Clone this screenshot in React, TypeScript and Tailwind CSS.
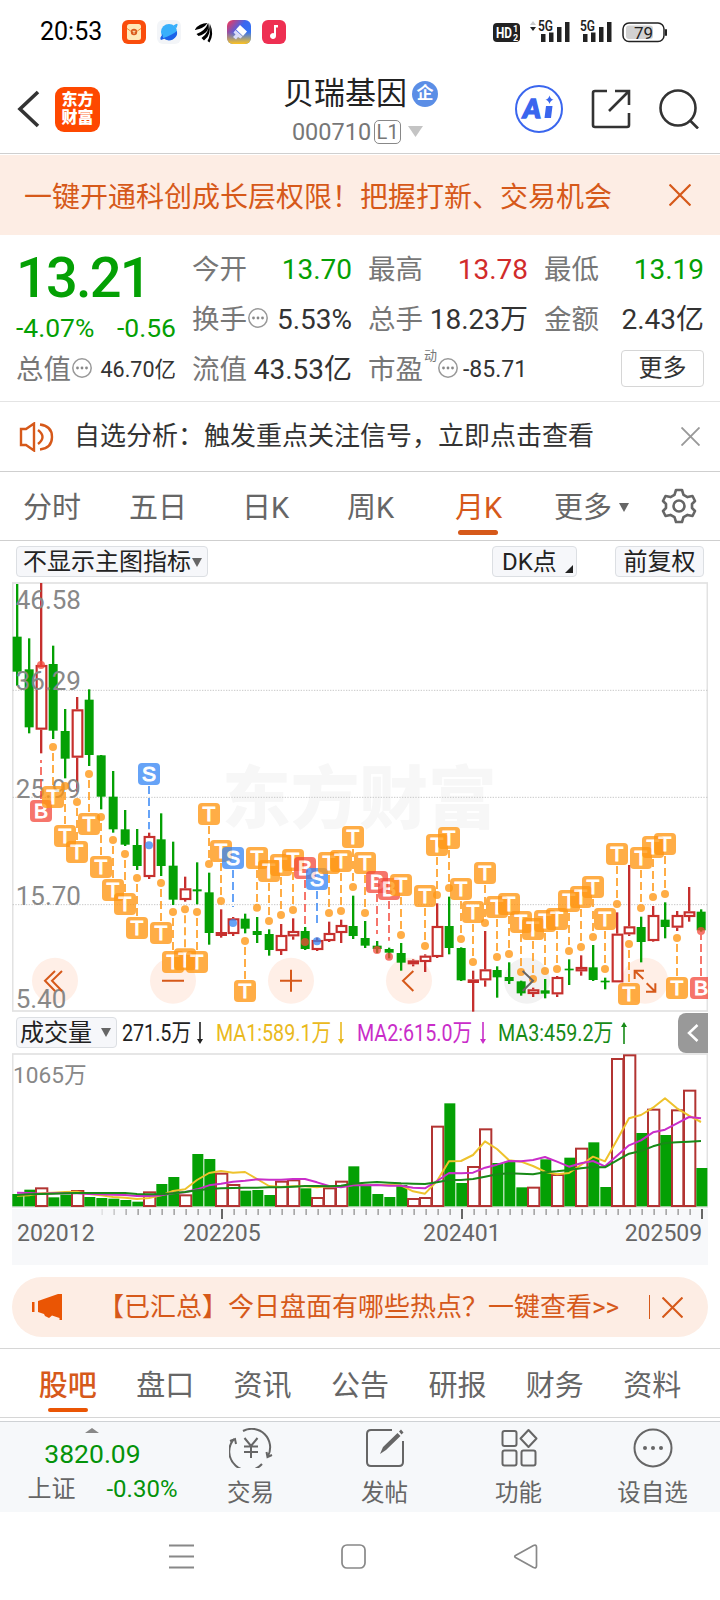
import type { ReactNode } from 'react';

type Candle = ['g' | 'r', number, number, number, number];
type Marker = [number, 'T' | 'B' | 'S', number, number];

// [colour, high, body top, body bottom, low], one per month
const CANDLES: Candle[] = [
  ['g', 27, 185, 290, 332],
  ['g', 190, 283, 457, 475],
  ['r', 24, 270, 464, 535],
  ['g', 212, 267, 467, 492],
  ['g', 402, 468, 551, 610],
  ['r', 366, 403, 548, 650],
  ['g', 343, 374, 540, 573],
  ['g', 540, 541, 665, 703],
  ['g', 588, 665, 763, 773],
  ['g', 705, 763, 809, 813],
  ['g', 762, 810, 873, 885],
  ['r', 773, 783, 906, 912],
  ['g', 715, 793, 873, 903],
  ['g', 800, 872, 974, 990],
  ['r', 905, 940, 975, 980],
  ['g', 862, 943, 949, 988],
  ['g', 893, 952, 1074, 1109],
  ['r', 1003, 1071, 1083, 1088],
  ['r', 1026, 1030, 1077, 1083],
  ['g', 1016, 1031, 1061, 1075],
  ['g', 1026, 1068, 1080, 1104],
  ['g', 1063, 1077, 1125, 1142],
  ['r', 1047, 1080, 1128, 1140],
  ['r', 1030, 1068, 1084, 1094],
  ['g', 1056, 1068, 1122, 1125],
  ['r', 1088, 1095, 1125, 1128],
  ['r', 1040, 1074, 1098, 1101],
  ['r', 1034, 1050, 1074, 1104],
  ['g', 962, 1053, 1083, 1092],
  ['g', 1038, 1089, 1112, 1119],
  ['g', 1098, 1112, 1122, 1134],
  ['g', 1118, 1122, 1133, 1150],
  ['g', 1104, 1134, 1163, 1187],
  ['r', 1153, 1156, 1168, 1174],
  ['r', 1138, 1142, 1161, 1191],
  ['r', 985, 1053, 1146, 1149],
  ['g', 965, 1053, 1119, 1138],
  ['g', 1117, 1119, 1216, 1218],
  ['r', 1187, 1213, 1224, 1310],
  ['r', 1068, 1183, 1216, 1235],
  ['g', 1174, 1185, 1207, 1268],
  ['g', 1162, 1206, 1218, 1227],
  ['g', 1217, 1219, 1255, 1262],
  ['r', 1238, 1243, 1257, 1266],
  ['g', 1212, 1246, 1256, 1270],
  ['r', 1203, 1206, 1258, 1266],
  ['g', 1153, 1181, 1186, 1230],
  ['r', 1141, 1176, 1189, 1202],
  ['g', 1110, 1177, 1215, 1218],
  ['g', 1208, 1217, 1222, 1243],
  ['r', 1012, 1076, 1222, 1222],
  ['r', 870, 1054, 1078, 1083],
  ['g', 1025, 1056, 1101, 1162],
  ['r', 993, 1020, 1098, 1100],
  ['g', 982, 1034, 1056, 1090],
  ['r', 1008, 1020, 1058, 1068],
  ['r', 936, 1009, 1026, 1040],
  ['g', 1003, 1010, 1066, 1070],
];

// [month index, kind, tag centre, dot centre]
const MARKERS: Marker[] = [
  [2, 'B', 708, 270], [3, 'T', 666, 516], [4, 'T', 783, 633], [5, 'T', 831, 681],
  [6, 'T', 747, 597], [7, 'T', 876, 726], [8, 'T', 945, 795], [9, 'T', 987, 837],
  [10, 'T', 1059, 909], [11, 'S', 597, 811], [12, 'T', 1074, 924], [13, 'T', 1161, 1011],
  [14, 'T', 1153, 1003], [15, 'T', 1161, 1011], [16, 'T', 717, 867], [17, 'T', 828, 978],
  [18, 'S', 849, 1044], [19, 'T', 1248, 1098], [20, 'T', 849, 998], [21, 'T', 888, 1038],
  [22, 'T', 870, 1020], [23, 'T', 855, 1005], [24, 'B', 879, 1101], [25, 'S', 912, 1099],
  [26, 'T', 864, 1014], [27, 'T', 858, 1008], [28, 'T', 786, 936], [29, 'T', 864, 1014],
  [30, 'B', 921, 1125], [31, 'B', 942, 1145], [32, 'T', 930, 1080], [34, 'T', 963, 1113],
  [35, 'T', 810, 960], [36, 'T', 789, 939], [37, 'T', 942, 1092], [38, 'T', 1011, 1161],
  [39, 'T', 894, 1044], [40, 'T', 996, 1146], [41, 'T', 987, 1137], [42, 'T', 1041, 1191],
  [43, 'T', 1062, 1212], [44, 'T', 1038, 1188], [45, 'T', 1032, 1182], [46, 'T', 978, 1128],
  [47, 'T', 966, 1116], [48, 'T', 936, 1086], [49, 'T', 1032, 1182], [50, 'T', 837, 987],
  [51, 'T', 1257, 1107], [52, 'T', 849, 999], [53, 'T', 816, 966], [54, 'T', 807, 957],
  [55, 'T', 1239, 1089], [57, 'B', 1239, 1068],
];

const VOLUMES = [
  567, 554, 548, 577, 569, 556, 576, 579, 581, 585, 590, 560, 537, 516, 569, 447, 462, 504, 538, 557,
  555, 570, 528, 524, 550, 577, 548, 528, 484, 540, 567, 576, 540, 580, 577, 363, 295, 534, 484, 371,
  474, 470, 547, 546, 463, 508, 458, 429, 412, 546, 160, 149, 384, 312, 390, 314, 255, 489,
];

const MA1 = [
  572, 571, 565, 563, 561, 560, 567, 571, 576, 578, 582, 579, 571, 558, 553, 525, 504, 498, 503, 501,
  522, 543, 546, 544, 544, 547, 543, 545, 540, 540, 540, 540, 541, 559, 566, 528, 469, 468, 450, 409,
  432, 466, 470, 483, 500, 508, 504, 480, 455, 469, 405, 340, 330, 308, 280, 310, 332, 351,
];
const MA2 = [
  563, 564, 566, 565, 565, 565, 567, 568, 569, 570, 573, 573, 571, 565, 562, 553, 541, 536, 530, 527,
  523, 524, 524, 522, 522, 532, 543, 547, 541, 541, 540, 542, 542, 548, 550, 528, 504, 505, 503, 488,
  479, 468, 469, 465, 456, 470, 485, 475, 468, 484, 452, 421, 406, 382, 374, 355, 336, 340,
];
const MA3 = [
  570, 568, 567, 566, 565, 564, 564, 564, 564, 564, 567, 568, 568, 565, 561, 556, 552, 550, 549, 548,
  548, 547, 547, 545, 543, 543, 544, 542, 536, 533, 531, 533, 535, 536, 537, 532, 525, 525, 522, 515,
  508, 505, 506, 508, 502, 499, 495, 490, 486, 487, 466, 446, 438, 424, 414, 412, 410, 408,
];

const GREEN = '#04a004';
const RED = '#c62f2d';
const MARKER_COLORS = { T: '#ff9713', B: '#f4473a', S: '#3485f5' };

const cx = (i: number) => 51 + i * 36;
const line = (ys: number[]) => ys.map((y, i) => `${cx(i)},${y}`).join(' ');

function StatusBar() {
  return (
    <div className="h-16 flex items-center pl-10 pr-[53px] text-black">
      <span className="text-[25px] w-[82px]">20:53</span>
      <div className="flex items-center gap-[11px]">
        <svg width="24" height="24" viewBox="0 0 24 24">
          <rect width="24" height="24" rx="6" fill="#fa4d0c" />
          <rect x="5" y="4" width="14" height="16" rx="2.5" fill="#ffe9b8" />
          <path d="M5 8.5Q12 15 19 8.5" fill="none" stroke="#ef8d35" strokeWidth="1" />
          <circle cx="12" cy="12" r="3.2" fill="#d95a1c" />
          <path d="M10.6 11.3h2.8M12 11.3v2.6" stroke="#ffe9b8" />
        </svg>
        <svg width="24" height="24" viewBox="0 0 24 24">
          <rect width="24" height="24" rx="6" fill="#f3f5f8" />
          <circle cx="12" cy="12" r="8" fill="#39b0fb" />
          <path d="M20 11A8 8 0 0 1 6.500 18Q15 15 20 11Z" fill="#1c62e8" />
          <path d="M4 20Q2 18 6 14Q5 18 8 18.500Z" fill="#1c62e8" />
          <path d="M16.500 5.500Q21 2.500 20.500 5T19 8.500z" fill="#39b0fb" />
        </svg>
        <svg width="24" height="24" viewBox="0 0 24 24">
          <path d="M3 9.500Q7 3 15.500 3Q12 8.500 3 10ZM4.500 14Q13 11 16.200 3Q18.200 13 6.500 16ZM9.500 18Q17 13 17 3Q20 15 12 20.500ZM15.500 21Q19 15 18 4Q22.500 14 17.500 22.500Z" fill="#000" />
        </svg>
        <svg width="24" height="24" viewBox="0 0 24 24">
          <defs>
            <linearGradient id="brush" x1="0" y1="0.1" x2="1" y2="0.9">
              <stop offset="0" stopColor="#f0385c" />
              <stop offset="0.45" stopColor="#3a66f0" />
              <stop offset="1" stopColor="#2f7bf6" />
            </linearGradient>
            <linearGradient id="brushLow" x1="0" y1="0" x2="0" y2="1">
              <stop offset="0.5" stopColor="#ffc21f" stopOpacity="0" />
              <stop offset="1" stopColor="#ffc21f" />
            </linearGradient>
          </defs>
          <rect width="24" height="24" rx="6" fill="url(#brush)" />
          <rect width="24" height="24" rx="6" fill="url(#brushLow)" />
          <path d="M13 5l7 6.500-4 4.500-7-6.500z" fill="#fff" />
          <path d="M8.500 10l7 6.500-2 2-2.500-1.500-2 2.500-3-2.500 2.500-2.500-2-2z" fill="#d9dcf8" />
        </svg>
        <svg width="24" height="24" viewBox="0 0 24 24">
          <rect width="24" height="24" rx="6" fill="#ee2f52" />
          <path d="M12 5h4v2.500h-2V16a3 3 0 1 1-2-2.800V5z" fill="#fff" />
        </svg>
      </div>
      <div className="ml-auto flex items-center">
        <svg width="174" height="28" viewBox="0 0 174 28" fontFamily="Roboto">
          <rect x="0" y="5" width="27" height="19" rx="4" fill="#222" />
          <text x="3" y="20" fontSize="15" fontWeight="700" fill="#fff" textLength="16" lengthAdjust="spacingAndGlyphs">HD</text>
          <text x="20" y="14" fontSize="9" fontWeight="700" fill="#fff">1</text>
          <text x="20" y="22.500" fontSize="9" fontWeight="700" fill="#fff">2</text>
          <path d="M37 7l3-4 3 4z" fill="#ccc" />
          <path d="M37 9l3 4 3-4z" fill="#222" />
          {[0, 42].map((x) => (
            <g key={x} fill="#222">
              <text x={45 + x} y="13" fontSize="14" fontWeight="600" textLength="15" lengthAdjust="spacingAndGlyphs">5G</text>
              <rect x={48 + x} y="16" width="4.500" height="8" />
              <rect x={56 + x} y="14.500" width="4.500" height="9.500" />
              <rect x={64 + x} y="9" width="4.500" height="15" />
              <rect x={72 + x} y="4" width="4.500" height="20" />
            </g>
          ))}
          <rect x="130" y="5" width="41" height="18.500" rx="6" fill="#fff" stroke="#222" strokeWidth="1.500" />
          <rect x="133" y="7.500" width="27" height="13.500" rx="3" fill="#d2d2d2" />
          <rect x="172" y="11" width="2" height="7" rx="1" fill="#222" />
          <text x="141" y="20.500" fontSize="17" fill="#222">79</text>
        </svg>
      </div>
    </div>
  );
}

function Header() {
  return (
    <div className="h-[90px] flex items-center justify-between border-b border-[#cfcfcf] pl-4 pr-4 pt-px">
      <div className="flex items-center w-[202px] gap-[14px]">
        <svg width="25" height="38" viewBox="0 0 25 38" fill="none" stroke="#333" strokeWidth="3.600">
          <path d="M22 2L4 19l18 17" />
        </svg>
        <div className="size-[45px] rounded-[9px] bg-[#fe4800] text-white font-black text-[16px] leading-[18px] flex flex-col items-center justify-center">
          <span>东方</span>
          <span>财富</span>
        </div>
      </div>
      <div className="flex flex-col items-center mr-[12px]">
        <div className="flex items-center gap-[5px] h-10 mt-[5px]">
          <span className="text-[31px] leading-10 text-[#222]">贝瑞基因</span>
          <span className="size-[26px] rounded-full bg-[#5b8ee6] text-white text-[17px] leading-[25px] text-center font-bold">企</span>
        </div>
        <div className="flex items-center text-[23.500px] leading-9 text-[#777] mr-1.5">
          <span>000710</span>
          <span className="ml-[3px] h-6 w-[27px] rounded-[5px] border-[1.500px] border-[#888] text-[20px] leading-[22px] text-center">L1</span>
          <svg className="ml-[7px]" width="15" height="11"><path d="M0 0h15L7.500 11z" fill="#c4c4c4" /></svg>
        </div>
      </div>
      <div className="flex items-center w-[189px] gap-7">
        <svg width="48" height="48" viewBox="0 0 48 48" className="shrink-0">
          <circle cx="24" cy="24" r="23" fill="none" stroke="#3a66ee" strokeWidth="2" />
          <text x="8" y="33" fontSize="27" fontWeight="900" fontStyle="italic" fontFamily="Lato" fill="#3a66ee" stroke="#3a66ee" strokeWidth="1.500">A</text>
          <path d="M31 21h6.500l-1.500 12h-6.500z" fill="#3a66ee" />
          <path d="M34.500 10.500q.8 3.500 4 4.300q-3.200.8-4 4.300q-.8-3.500-4-4.300q3.200-.8 4-4.300z" fill="#3a66ee" />
        </svg>
        <svg width="40" height="40" viewBox="0 0 40 40" fill="none" stroke="#333" strokeWidth="2.600" className="shrink-0">
          <path d="M16 2H4Q2 2 2 4v32q0 2 2 2h32q2 0 2-2V24M24 2h14v14M18 22L38 2" />
        </svg>
        <svg width="40" height="40" viewBox="0 0 40 40" fill="none" stroke="#333" strokeWidth="2.600" className="shrink-0">
          <circle cx="19" cy="19" r="17.500" />
          <path d="M30.500 31l8.500 8.500" />
        </svg>
      </div>
    </div>
  );
}

function Close({ size, color }: { size: number; color: string }) {
  return (
    <svg width={size} height={size} viewBox="0 0 20 20" stroke={color} strokeWidth="2">
      <path d="M0.500 0.500l19 19M19.500 0.500l-19 19" />
    </svg>
  );
}

function Dots() {
  return (
    <svg width="20" height="20" viewBox="0 0 20 20" className="shrink-0 mb-1 ml-px">
      <circle cx="10" cy="10" r="9.200" fill="none" stroke="#999" strokeWidth="1.500" />
      <g fill="#888">
        <circle cx="5.500" cy="10" r="1.400" />
        <circle cx="10" cy="10" r="1.400" />
        <circle cx="14.500" cy="10" r="1.400" />
      </g>
    </svg>
  );
}

function Stat({ label, value, tone = 'text-[#333]', info }: { label: string; value: string; tone?: string; info?: boolean }) {
  return (
    <div className="h-[50px] flex items-center justify-between whitespace-nowrap">
      <span className="flex items-center text-[27.500px] text-[#777]">
        {label}
        {info && <Dots />}
      </span>
      <span className={`text-[28px] ${tone}`}>{value}</span>
    </div>
  );
}

function Quote() {
  return (
    <section className="h-[167px] border-b border-[#e4e4e4] px-4 pt-[10px] flex justify-between">
      <div className="w-[160px] flex flex-col">
        <div className="h-[61px] text-[56px] leading-[66px] font-medium tracking-[-1.8px] text-[#04a004]">13.21</div>
        <div className="h-[39px] flex items-center justify-between text-[26.500px] text-[#04a004] pt-[4px]">
          <span>-4.07%</span>
          <span>-0.56</span>
        </div>
        <div className="h-[50px] flex items-center justify-between whitespace-nowrap">
          <span className="flex items-center text-[27.500px] text-[#777]">总值<Dots /></span>
          <span className="text-[21.500px] text-[#333]">46.70亿</span>
        </div>
      </div>
      <div className="w-[160px]">
        <Stat label="今开" value="13.70" tone="text-[#04a004]" />
        <Stat label="换手" value="5.53%" info />
        <Stat label="流值" value="43.53亿" />
      </div>
      <div className="w-[160px]">
        <Stat label="最高" value="13.78" tone="text-[#d12b2b]" />
        <Stat label="总手" value="18.23万" />
        <div className="h-[50px] flex items-center whitespace-nowrap text-[27.500px] text-[#777]">
          市盈
          <span className="text-[13px] self-start leading-4 pt-[3px] ml-px">动</span>
          <Dots />
          <span className="ml-[5px] text-[23px] text-[#333]">-85.71</span>
        </div>
      </div>
      <div className="w-[160px]">
        <Stat label="最低" value="13.19" tone="text-[#04a004]" />
        <Stat label="金额" value="2.43亿" />
        <div className="h-[46px] flex items-center justify-end">
          <span className="w-[83px] h-[37px] rounded-[4px] border border-[#d6d6d6] text-2xl leading-[34px] text-center text-[#333]">更多</span>
        </div>
      </div>
    </section>
  );
}

function Period({ children, className }: { children: ReactNode; className: string }) {
  return <div className={`${className} h-full shrink-0 flex items-center whitespace-nowrap pt-[6px] text-[29px] text-[#666]`}>{children}</div>;
}

function Periods() {
  return (
    <nav className="h-[69px] border-b border-[#cfcfcf] flex items-center pl-[23px]">
      <Period className="w-[106px]">分时</Period>
      <Period className="w-[113px]">五日</Period>
      <Period className="w-[105px]">日K</Period>
      <Period className="w-[108px]">周K</Period>
      <div className="w-[99px] h-full shrink-0 flex flex-col text-[29px] leading-[73px] text-[#d6591a]">
        <span className="h-[58px]">月K</span>
        <span className="ml-[3px] w-10 h-[5px] shrink-0 rounded-full bg-[#d6591a]" />
      </div>
      <Period className="w-[107px]">
        更多
        <svg className="ml-[7px] mb-1" width="10" height="9"><path d="M0 0h10L5 9z" fill="#666" /></svg>
      </Period>
      <svg width="36" height="36" viewBox="0 0 36 36" fill="none" stroke="#666" strokeWidth="2.600" strokeLinejoin="round">
        <path d="M15 2h6l1.500 4.800 4 2.300 5-1.100 2.500 5-3 3v4l3 3-2.500 5-5-1.100-4 2.300L21 34h-6l-1.500-4.800-4-2.300-5 1.100-2.500-5 3-3v-4l-3-3 2.500-5 5 1.100 4-2.300z" />
        <circle cx="18" cy="18" r="5.500" />
      </svg>
    </nav>
  );
}

function CandleShape({ c, i }: { c: Candle; i: number }) {
  const [kind, high, top, bottom, low] = c;
  const x = cx(i);
  const thin = bottom - top < 13;
  if (kind === 'g') {
    return (
      <g fill={GREEN}>
        <rect x={x - 3} y={high} width="7" height={low - high} />
        <rect x={x - 13} y={top} width="27" height={bottom - top} />
      </g>
    );
  }
  return (
    <g fill={RED}>
      <rect x={x - 3} y={high} width="7" height={top - high} />
      <rect x={x - 3} y={bottom} width="7" height={low - bottom} />
      {thin ? (
        <rect x={x - 16} y={top} width="34" height={bottom - top} />
      ) : (
        <rect x={x - 13} y={top + 3} width="29" height={bottom - top - 6} fill="#fff" stroke={RED} strokeWidth="6.500" />
      )}
    </g>
  );
}

function MarkerShape({ m }: { m: Marker }) {
  const [i, kind, tag, dot] = m;
  const x = cx(i);
  const color = MARKER_COLORS[kind];
  const above = tag < dot;
  let end = dot;
  if (kind !== 'T' && i !== 57) end = i === 2 ? 555 : dot - 48;
  return (
    <g opacity={kind === 'T' ? 0.78 : 0.75}>
      <line x1={x} x2={x} y1={above ? tag + 36 : tag - 36} y2={end} stroke={color} strokeWidth="6" strokeDasharray="24 12" />
      <circle cx={x} cy={dot} r="12" fill={color} />
      <rect x={x - 33} y={tag - 33} width="66" height="66" rx="12" fill={color} />
      <text x={x} y={tag + 22} textAnchor="middle" fontSize="63" fontFamily="'Liberation Sans', Arial, sans-serif" fill="#fff" stroke="#fff" strokeWidth="3">{kind}</text>
    </g>
  );
}

function KChart() {
  return (
    <svg width="696" height="430" viewBox="36 21 2088 1290" fontFamily="Roboto, 'Noto Sans CJK SC', sans-serif" className="block">
      <rect x="38" y="24" width="2084" height="1284" fill="none" stroke="#e2e2e2" strokeWidth="5" />
      <text x="666" y="745" fontSize="206" fontWeight="800" fill="#f7f7f7">东方财富</text>
      {[346, 667, 989].map((y) => (
        <line key={y} x1="38" x2="2122" y1={y} y2={y} stroke="#c8c8c8" strokeWidth="3" strokeDasharray="4 4" />
      ))}
      {[165, 519, 873, 1227, 1581, 1935].map((x) => (
        <circle key={x} cx={x} cy="1217" r="69" fill={x === 1581 ? '#f2f2f2' : '#ffefe7'} />
      ))}
      {CANDLES.map((c, i) => <CandleShape key={i} c={c} i={i} />)}
      <g fill="#888" fontSize="78">
        <text x="47" y="101">46.58</text>
        <text x="47" y="344">36.29</text>
        <text x="47" y="668">25.99</text>
        <text x="47" y="989">15.70</text>
        <text x="47" y="1299">5.40</text>
      </g>
      {MARKERS.map((m) => <MarkerShape key={m[0]} m={m} />)}
      <g fill="none" stroke="#d6591a" strokeWidth="6">
        <path d="M165 1188l-30 29 30 31M186 1188l-30 29 30 31" />
        <path d="M486 1217h66M840 1217h66M873 1184v66" />
        <path d="M1240 1188l-31 29 31 31" />
        <path d="M1904 1212v-25h28M1904 1187l26 25M1966 1225v25h-28M1966 1250l-26-25" />
      </g>
      <path d="M1568 1188l31 29-31 31" fill="none" stroke="#666" strokeWidth="6" />
    </svg>
  );
}

function VolumeChart() {
  return (
    <svg width="696" height="212" viewBox="36 144 2088 636" fontFamily="Roboto, 'Noto Sans CJK SC', sans-serif" className="block">
      <rect x="36" y="612" width="2088" height="168" fill="#f7f8fa" />
      <rect x="38" y="147" width="2084" height="459" fill="none" stroke="#e2e2e2" strokeWidth="5" />
      {VOLUMES.map((top, i) =>
        CANDLES[i][0] === 'g' ? (
          <rect key={i} x={cx(i) - 14} y={top} width="33" height={604 - top} fill={GREEN} />
        ) : (
          <rect key={i} x={cx(i) - 15} y={top + 2} width="34" height={601 - top} fill="#fff" stroke="#b23432" strokeWidth="6" />
        ),
      )}
      <g fill="none" strokeWidth="6" strokeLinejoin="round">
        <polyline points={line(MA1)} stroke="#eec22c" />
        <polyline points={line(MA2)} stroke="#c92dc9" />
        <polyline points={line(MA3)} stroke="#178a17" />
      </g>
      {VOLUMES.map((_, i) => {
        const major = i === 17 || i === 37 || i === 57;
        if (i < 7) return null;
        return <rect key={i} x={cx(i) + (major ? 0 : 1)} y="612" width={major ? 6 : 5} height={major ? 30 : 18} fill={major ? '#666' : '#a8a8a8'} opacity={i < 10 ? (i - 6) * 0.28 : 1} />;
      })}
      <text x="39" y="234" fontSize="68" fill="#888">1065万</text>
      <g fill="#666" fontSize="69">
        <text x="51" y="708">202012</text>
        <text x="549" y="708">202205</text>
        <text x="1269" y="708">202401</text>
        <text x="1874" y="708">202509</text>
      </g>
    </svg>
  );
}

function Average({ text, arrow, className }: { text: string; arrow: 'up' | 'down'; className: string }) {
  return (
    <div className={`${className} shrink-0 flex items-center justify-between`}>
      <span className="w-0 whitespace-nowrap">
        <span className="inline-block origin-left scale-x-[0.82] text-2xl leading-9">{text}</span>
      </span>
      <svg width="8" height="24" viewBox="0 0 8 24" fill="currentColor">
        {arrow === 'down' ? (
          <path d="M3.200 1h1.600v17H7L4 23 1 18h2.200z" />
        ) : (
          <path d="M3.200 23h1.600V6H7L4 1 1 6h2.200z" />
        )}
      </svg>
    </div>
  );
}

function BottomItem({ label, children }: { label: string; children: ReactNode }) {
  return (
    <div className="w-[134px] flex flex-col items-center pl-px">
      <svg width="44" height="40" viewBox="0 0 44 40" fill="none" stroke="#666" strokeWidth="2" className="mt-[6px]">
        {children}
      </svg>
      <span className="mt-[7px] text-[23.500px] leading-9 text-[#666]">{label}</span>
    </div>
  );
}

const SECTIONS = ['股吧', '盘口', '资讯', '公告', '研报', '财务', '资料'];

export default function App() {
  return (
    <main className="w-[720px] h-[1600px] overflow-hidden bg-white font-[Roboto,'Noto_Sans_CJK_SC',sans-serif]">
      <StatusBar />
      <Header />
      <div className="mt-px h-20 bg-[#fdede4] flex items-center justify-between pl-6 pr-[29px] text-[28px] text-[#d6591a] whitespace-nowrap">
        <span className="pt-[5px]">一键开通科创成长层权限！把握打新、交易机会</span>
        <Close size={22} color="#d6591a" />
      </div>
      <Quote />
      <div className="h-[70px] border-b border-[#cfcfcf] flex items-center pl-[19px] pr-5">
        <svg width="36" height="30" viewBox="0 0 36 30" fill="none" stroke="#d6591a" strokeWidth="2.400">
          <path d="M2 7h5l8-5.500v27L7 23H2zM19 8q9 7 0 14M21 2.500q12 1.500 12 12.500t-12 12.500" />
        </svg>
        <span className="ml-[19px] text-[26px] text-[#333] whitespace-nowrap">自选分析：触发重点关注信号，立即点击查看</span>
        <span className="ml-auto"><Close size={19} color="#999" /></span>
      </div>
      <Periods />

      <div className="h-[41px] flex items-start pt-[5px] px-4 text-2xl leading-[31px] text-[#222] whitespace-nowrap">
        <div className="w-[192px] h-[31px] rounded-[4px] border border-[#dcdfe3] bg-[#f6f7fa] flex items-center pl-1.5 pt-0.5">
          不显示主图指标
          <svg width="10" height="9" className="ml-px"><path d="M0 0h10L5 9z" fill="#666" /></svg>
        </div>
        <div className="ml-auto w-[85px] h-[31px] rounded-[4px] border border-[#dcdfe3] bg-[#f6f7fa] flex items-center pl-[9px] pt-0.5">
          DK点
          <svg width="8" height="8" className="ml-[8px] mt-3"><path d="M8 0v8H0z" fill="#222" /></svg>
        </div>
        <div className="ml-[38px] w-[89px] h-[31px] rounded-[4px] border border-[#dcdfe3] bg-[#f6f7fa] text-center">前复权</div>
      </div>

      <div className="px-3">
        <KChart />
        <div className="h-[41px] flex items-center pl-1">
          <div className="shrink-0 w-[101px] h-[31px] rounded-[4px] border border-[#dcdfe3] bg-[#f6f7fa] flex items-center justify-between pl-[3px] pr-[5px] text-2xl leading-7 text-[#222]">
            成交量
            <svg width="10" height="9"><path d="M0 0h10L5 9z" fill="#666" /></svg>
          </div>
          <Average className="ml-[5px] w-[82px] text-[#222]" text="271.5万" arrow="down" />
          <Average className="ml-[12px] w-[129px] text-[#eab920]" text="MA1:589.1万" arrow="down" />
          <Average className="ml-[12px] w-[130px] text-[#c92dc9]" text="MA2:615.0万" arrow="down" />
          <Average className="ml-[11px] w-[130px] text-[#178a17]" text="MA3:459.2万" arrow="up" />
          <div className="ml-auto w-[30px] h-10 rounded-l-lg bg-[#999] flex items-center justify-center">
            <svg width="12" height="18" fill="none" stroke="#fff" strokeWidth="2.500"><path d="M10.500 1L2 9l8.500 8" /></svg>
          </div>
        </div>
        <VolumeChart />
      </div>

      <div className="mt-3 mx-3 h-[60px] rounded-full bg-[#fdede4] flex items-center text-[26px] text-[#d6591a] whitespace-nowrap">
        <svg width="32" height="28" viewBox="0 0 32 28" className="ml-5" fill="#ea5504">
          <path d="M0 9h2.500v10H0zM6 8l20-7h4v26h-2.500v-2L20 22.500l-3 2.500-4-2-1-2-6-2z" />
        </svg>
        <span className="ml-[34px]">【已汇总】今日盘面有哪些热点？一键查看&gt;&gt;</span>
        <span className="ml-auto mr-3 w-px h-6 bg-[#d6591a]" />
        <span className="mr-[25px]"><Close size={21} color="#d6591a" /></span>
      </div>

      <nav className="mt-[11px] h-[70px] border-y border-[#d6d6d6] px-[19px] flex">
        {SECTIONS.map((name, i) => (
          <div key={name} className="flex-1 flex flex-col items-center text-[29px] leading-[74px] text-[#666]">
            <span className={i === 0 ? 'h-[59px] text-[#d6591a] font-medium' : 'h-[59px]'}>{name}</span>
            {i === 0 && <span className="w-10 h-1 shrink-0 rounded-full bg-[#ea5504]" />}
          </div>
        ))}
      </nav>

      <div className="mt-[3px] h-[91px] bg-[#f6f8fa] border-t border-[#cfd2d5] flex">
        <div className="w-[183px] flex flex-col items-center pt-[6px]">
          <svg width="14" height="5"><path d="M0 5l7-5 7 5z" fill="#888" /></svg>
          <div className="mt-[3px] ml-0.5 text-[26.500px] leading-9 text-[#04930a]">3820.09</div>
          <div className="mt-px w-[150px] ml-[22px] flex items-center justify-between text-[24px] leading-[33px] whitespace-nowrap">
            <span className="text-[#666]">上证</span>
            <span className="text-[#04930a]">-0.30%</span>
          </div>
        </div>
        <BottomItem label="交易">
          <path d="M14 3A18.500 18.500 0 0 1 39 28M33 36A18.500 18.500 0 0 1 5 11M1 13l5-2 1 5M43 27l-4.500 2-1-5M15.500 10l6.500 8 6.500-8M15 18.500h14M15 24h14M22 18v12" />
        </BottomItem>
        <BottomItem label="发帖">
          <path d="M29 2H8Q4 2 4 6v28q0 4 4 4h28q4 0 4-4V13" />
          <path d="M17 26l3-7L34.500 5l3 3L23 22zM36 3.500L38 1.500l2.500 3-2 2z" fill="#666" stroke="none" />
        </BottomItem>
        <BottomItem label="功能">
          <rect x="5.500" y="3" width="14" height="15" rx="2" />
          <rect x="5.500" y="22.500" width="14" height="15" rx="2" />
          <rect x="24.500" y="22.500" width="14" height="15" rx="2" />
          <path d="M31.500 2l8 8.500-8 8.500-8-8.500z" strokeLinejoin="round" />
        </BottomItem>
        <BottomItem label="设自选">
          <circle cx="22" cy="20" r="18.500" />
          <g fill="#666" stroke="none">
            <circle cx="14" cy="20" r="2" />
            <circle cx="22" cy="20" r="2" />
            <circle cx="30" cy="20" r="2" />
          </g>
        </BottomItem>
      </div>

      <div className="h-[88px] flex items-center justify-center gap-[147px] pr-[13px]">
        <svg width="25" height="25" stroke="#888" strokeWidth="2"><path d="M0 1.500h25M0 12.500h25M0 23.500h25" /></svg>
        <svg width="25" height="25" fill="none" stroke="#888" strokeWidth="1.700"><rect x="1" y="1" width="23" height="23" rx="5" /></svg>
        <svg width="25" height="25" fill="none" stroke="#888" strokeWidth="1.700" strokeLinejoin="round"><path d="M2.500 11.500L20.500 1.500Q23.500 0.500 23.500 3v19q0 2.500-3 1.500L2.500 13.500q-1.500-1 0-2z" /></svg>
      </div>
    </main>
  );
}
